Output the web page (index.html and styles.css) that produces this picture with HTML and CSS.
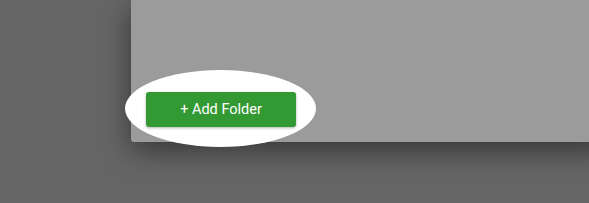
FILE: index.html
```html
<!DOCTYPE html>
<html>
<head>
<meta charset="utf-8">
<link rel="stylesheet" href="styles.css">
</head>
<body>
<div class="stage">
  <div class="panel">
    <div class="actions">
      <div class="spot"></div>
      <button class="add-btn">+ Add Folder</button>
    </div>
  </div>
</div>
</body>
</html>
```
FILE: styles.css
```css
html, body {
  margin: 0;
  padding: 0;
  width: 589px;
  height: 203px;
  overflow: hidden;
  background: #666666;
  font-family: Roboto, "Liberation Sans", sans-serif;
}
.stage {
  width: 589px;
  height: 203px;
  display: flex;
  align-items: flex-start;
  padding-left: 131px;
  box-sizing: border-box;
}
.panel {
  width: 480px;
  flex-shrink: 0;
  height: 142px;
  background: #9b9b9b;
  border-bottom-left-radius: 3px;
  box-shadow: 0 8px 30px rgba(0, 0, 0, 0.5);
  display: flex;
  align-items: flex-end;
  padding: 0 0 15px 15px;
  box-sizing: border-box;
}
.actions {
  position: relative;
  display: flex;
}
.spot {
  position: absolute;
  left: -21px;
  top: -22px;
  width: 191px;
  height: 77px;
  border-radius: 50%;
  background: #ffffff;
}
.add-btn {
  position: relative;
  width: 150px;
  height: 35px;
  border: none;
  border-radius: 3px;
  background: #339933;
  color: #ffffff;
  font-family: Roboto, "Liberation Sans", sans-serif;
  font-size: 14.5px;
  font-weight: 400;
  box-shadow: 0 1px 3px rgba(0, 0, 0, 0.3);
  padding: 0;
}
```
